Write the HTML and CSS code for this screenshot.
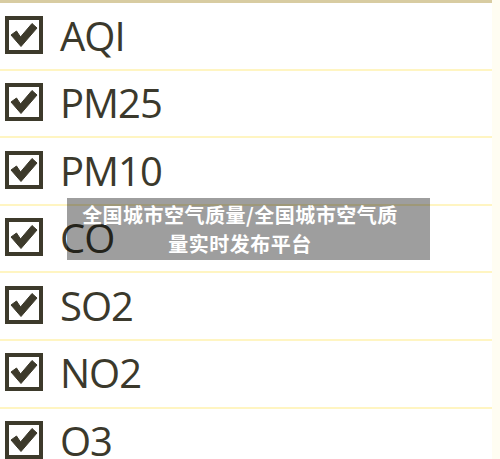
FILE: index.html
```html
<!DOCTYPE html>
<html lang="zh-CN">
<head>
<meta charset="utf-8">
<title>全国城市空气质量</title>
<link rel="stylesheet" href="styles.css">
</head>
<body>
<div class="page">
  <ul class="list">
    <li class="row"><span class="box"><svg viewBox="0 0 30 30" class="tick"><polygon points="2,15 7.5,11 11.5,17 23,3.5 28,8 12,26.5"/></svg></span><span class="label">AQI</span></li>
    <li class="row"><span class="box"><svg viewBox="0 0 30 30" class="tick"><polygon points="2,15 7.5,11 11.5,17 23,3.5 28,8 12,26.5"/></svg></span><span class="label">PM25</span></li>
    <li class="row"><span class="box"><svg viewBox="0 0 30 30" class="tick"><polygon points="2,15 7.5,11 11.5,17 23,3.5 28,8 12,26.5"/></svg></span><span class="label">PM10</span></li>
    <li class="row"><span class="box"><svg viewBox="0 0 30 30" class="tick"><polygon points="2,15 7.5,11 11.5,17 23,3.5 28,8 12,26.5"/></svg></span><span class="label">CO</span></li>
    <li class="row"><span class="box"><svg viewBox="0 0 30 30" class="tick"><polygon points="2,15 7.5,11 11.5,17 23,3.5 28,8 12,26.5"/></svg></span><span class="label">SO2</span></li>
    <li class="row"><span class="box"><svg viewBox="0 0 30 30" class="tick"><polygon points="2,15 7.5,11 11.5,17 23,3.5 28,8 12,26.5"/></svg></span><span class="label">NO2</span></li>
    <li class="row"><span class="box"><svg viewBox="0 0 30 30" class="tick"><polygon points="2,15 7.5,11 11.5,17 23,3.5 28,8 12,26.5"/></svg></span><span class="label">O3</span></li>
  </ul>
  <div class="caption">全国城市空气质量/全国城市空气质量实时发布平台</div>
</div>
</body>
</html>
```

FILE: styles.css
```css
html, body {
  margin: 0;
  padding: 0;
  height: 100%;
  overflow: hidden;
  background: #fffdf2;
}
.page {
  position: relative;
  width: 500px;
  height: 459px;
  overflow: hidden;
}
.list {
  list-style: none;
  margin: 0;
  padding: 0;
  width: 492px;
  background: #ffffff;
  border-top: 3px solid #d8cca2;
}
.row {
  box-sizing: border-box;
  height: 67.6px;
  display: flex;
  align-items: center;
  padding-left: 5px;
  padding-bottom: 2.6px;
  border-bottom: 2.6px solid #fff5c2;
}
.box {
  box-sizing: border-box;
  width: 38px;
  height: 38px;
  border: 4px solid #3d3a2b;
  background: #fff;
  display: flex;
  flex: none;
}
.tick {
  width: 30px;
  height: 30px;
  fill: #3d3a2b;
  stroke: #3d3a2b;
  stroke-width: 1;
  stroke-linejoin: round;
}
.label {
  margin-left: 17px;
  font-family: "Open Sans", "Liberation Sans", sans-serif;
  font-size: 40px;
  letter-spacing: -1px;
  color: #3b392c;
  line-height: 1;
  padding-top: 2px;
}
.caption {
  position: absolute;
  left: 67px;
  top: 198px;
  width: 324px;
  height: 58px;
  padding: 2px 28px 2px 11px;
  background: rgba(0, 0, 0, 0.38);
  color: #ffffff;
  font-family: "Noto Sans CJK SC", sans-serif;
  font-weight: 700;
  font-size: 20px;
  letter-spacing: 0.5px;
  line-height: 29px;
  text-align: center;
}
```
